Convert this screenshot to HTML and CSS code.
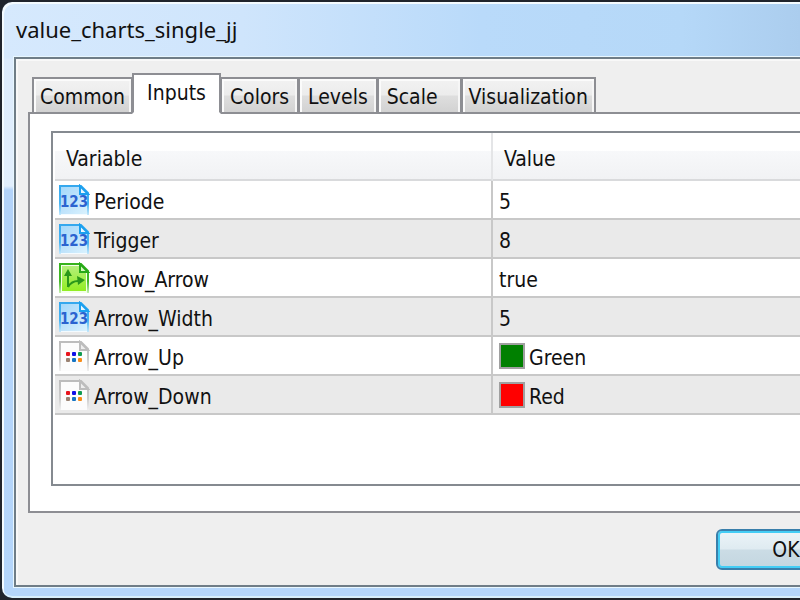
FILE: index.html
```html
<!DOCTYPE html>
<html lang="en">
<head>
<meta charset="utf-8">
<title>value_charts_single_jj</title>
<link rel="stylesheet" href="styles.css">
</head>
<body>
<svg width="0" height="0" class="defs" aria-hidden="true">
  <defs>
    <linearGradient id="blue" x1="0" y1="0" x2="1" y2="1"><stop offset="0" stop-color="#a5d9fb"/><stop offset=".5" stop-color="#bfe3fb"/><stop offset="1" stop-color="#d9f2fe"/></linearGradient>
    <linearGradient id="blueEdge" x1="0" y1="0" x2="0" y2="1"><stop offset="0" stop-color="#35a8ee"/><stop offset=".6" stop-color="#48b4f2"/><stop offset="1" stop-color="#c4e8fc"/></linearGradient>
    <linearGradient id="green" x1="0" y1="0" x2="0" y2="1"><stop offset="0" stop-color="#b5ef7c"/><stop offset="1" stop-color="#92ee22"/></linearGradient>
    <linearGradient id="greenEdge" x1="0" y1="0" x2="0" y2="1"><stop offset="0" stop-color="#37b31d"/><stop offset=".6" stop-color="#45b92a"/><stop offset="1" stop-color="#c4efb0"/></linearGradient>
    <linearGradient id="greyEdge" x1="0" y1="0" x2="0" y2="1"><stop offset="0" stop-color="#bcbcbc"/><stop offset=".6" stop-color="#cccccc"/><stop offset="1" stop-color="#f0f0f0"/></linearGradient>
    <symbol id="number" viewBox="0 0 32 32">
      <path d="M1 1H23L31 9V31H1Z" fill="#f4fbff"/>
      <path d="M3 3H22V10H29V30H3Z" fill="url(#blue)"/>
      <path d="M2 31V2H23L30 9V31" fill="none" stroke="url(#blueEdge)" stroke-width="2"/>
      <path d="M22 2V10H30Z" fill="#e9f8ff" stroke="#1ba0ef" stroke-width="2"/>
      <text x="16" y="23" text-anchor="middle" class="digits">123</text>
    </symbol>
    <symbol id="bool" viewBox="0 0 32 32">
      <path d="M1 1H23L31 9V31H1Z" fill="#f2ffe8"/>
      <path d="M4 4H22V10H28V29H4Z" fill="url(#green)"/>
      <path d="M2 31V2H23L30 9V31" fill="none" stroke="url(#greenEdge)" stroke-width="2"/>
      <path d="M22 2V10H30Z" fill="#d6f8bd" stroke="#26a818" stroke-width="2"/>
      <path d="M10 25V12M10 25C13 20 16 19 20 19" fill="none" stroke="#2a981a" stroke-width="2"/>
      <path d="M6 14L10 7L14 14ZM19 14L27 18L20 23Z" fill="#2a981a"/>
    </symbol>
    <symbol id="color" viewBox="0 0 32 32">
      <path d="M2 2H23L30 9V31H2Z" fill="#fcfcfc"/>
      <path d="M2 31V2H23L30 9V31" fill="none" stroke="url(#greyEdge)" stroke-width="2"/>
      <path d="M22 2V10H30Z" fill="#eeeeee" stroke="#bdbdbd" stroke-width="2"/>
      <rect x="8" y="12" width="4" height="4" rx="1" fill="#e8141c"/>
      <rect x="14" y="12" width="4" height="4" rx="1" fill="#1010e8"/>
      <rect x="20" y="12" width="4" height="4" rx="1" fill="#109a50"/>
      <rect x="8" y="18" width="4" height="4" rx="1" fill="#9a8272"/>
      <rect x="14" y="18" width="4" height="4" rx="1" fill="#1474c4"/>
      <rect x="20" y="18" width="4" height="4" rx="1" fill="#f88c18"/>
    </symbol>
  </defs>
</svg>
<div class="window">
  <h1 class="title">value_charts_single_jj</h1>
  <main class="client">
    <div class="tabs" role="tablist">
      <button class="tab long" role="tab">Common</button>
      <button class="tab active" role="tab" aria-selected="true">Inputs</button>
      <button class="tab" role="tab">Colors</button>
      <button class="tab" role="tab">Levels</button>
      <button class="tab scale" role="tab">Scale</button>
      <button class="tab long" role="tab">Visualization</button>
    </div>
    <section class="pane">
      <div class="list">
        <table>
          <colgroup><col class="name-col"><col></colgroup>
          <thead><tr><th>Variable</th><th>Value</th></tr></thead>
          <tbody>
            <tr><td><div class="cell"><svg class="icon"><use href="#number"/></svg>Periode</div></td><td>5</td></tr>
            <tr><td><div class="cell"><svg class="icon"><use href="#number"/></svg>Trigger</div></td><td>8</td></tr>
            <tr><td><div class="cell"><svg class="icon"><use href="#bool"/></svg>Show_Arrow</div></td><td>true</td></tr>
            <tr><td><div class="cell"><svg class="icon"><use href="#number"/></svg>Arrow_Width</div></td><td>5</td></tr>
            <tr><td><div class="cell"><svg class="icon"><use href="#color"/></svg>Arrow_Up</div></td><td><div class="cell"><span class="swatch green"></span>Green</div></td></tr>
            <tr><td><div class="cell"><svg class="icon"><use href="#color"/></svg>Arrow_Down</div></td><td><div class="cell"><span class="swatch red"></span>Red</div></td></tr>
          </tbody>
        </table>
      </div>
    </section>
    <footer class="actions"><button class="ok">OK</button></footer>
  </main>
</div>
</body>
</html>
```
FILE: styles.css
```css
* { box-sizing: border-box; }

body {
  margin: 0;
  background: #20242c;
  color: #111;
  font: 21px/26px "DejaVu Sans Condensed", "DejaVu Sans", sans-serif;
  overflow: hidden;
}

.defs { position: absolute; }

.window {
  display: flex;
  flex-direction: column;
  min-height: 100vh;
  padding: 0 0 11px 12px;
  border: solid #20242c;
  border-width: 2px 0 2px 2px;
  border-radius: 12px 0 0 12px;
  box-shadow: inset 2px 2px 0 #f4fbff, inset 0 -2px 0 #d8effc;
  background:
    linear-gradient(#d9eafc00 56px, #dcebfc 57px, #e2effd 184px, #b3d3f9 188px, #b5d6fb) 0 0 / 14px 100% no-repeat,
    linear-gradient(#b5d6fb, #b5d6fb) 0 100% / 100% 14px no-repeat,
    linear-gradient(90deg, #d6e9fd, #cfe5fc 240px, #b9dafa 480px, #b5d8f8 680px, #abcdee);
}

.title {
  margin: 0;
  padding: 11px 0 0 2px;
  height: 55px;
  font: 22px/32px "Noto Sans", "Open Sans", sans-serif;
}

.client {
  flex: 1;
  display: flex;
  flex-direction: column;
  padding: 14px 0 15px 12px;
  background: #efefef;
  border: 2px solid #6f7d87;
  border-right: 0;
  outline: 1px solid #e8f7ff;
  box-shadow: inset 2px 2px 0 #f8f8f8;
}

.tabs {
  display: flex;
  align-items: flex-end;
  padding-left: 5px;
  margin-bottom: -2px;
}

.tab {
  height: 37px;
  margin: 0 0 0 -1px;
  padding: 2px 8px 0;
  border: 2px solid #8d8e93;
  box-shadow: inset 2px 2px 0 #fbfbfb, inset -2px 0 0 #f6f6f6;
  background: linear-gradient(#f2f2f2, #ececec 48%, #dedede 52%, #d2d2d2);
  color: #111;
  font: inherit;
}

.tab.active {
  position: relative;
  height: 41px;
  padding: 0 13px 2px;
  border-bottom-color: #fff;
  background: #fff;
  box-shadow: none;
}

.tab.long { padding: 2px 6px 0; }

.tab.scale { padding-right: 22px; }

.pane {
  flex: 1;
  display: flex;
  padding: 17px 0 25px 21px;
  background: #fff;
  border: 2px solid #8d8e93;
  border-right: 0;
}

.list {
  flex: 1;
  padding-left: 2px;
  border: 2px solid #858a90;
  border-right: 0;
}

table {
  width: 100%;
  border-collapse: separate;
  border-spacing: 0;
  table-layout: fixed;
}

.name-col { width: 438px; }

th {
  height: 48px;
  padding: 6px 11px 0;
  text-align: left;
  font-weight: normal;
  background: linear-gradient(#fff 38%, #f7f8fa 40%, #f1f2f4);
  border-bottom: 2px solid #d9dadc;
}

th:first-child { border-right: 2px solid #e4e5e7; }

td {
  height: 39px;
  padding: 4px 6px 0;
  border-bottom: 2px solid #c8c8c8;
}

td:first-child {
  padding-left: 3px;
  border-right: 2px solid #c8c8c8;
}

tbody tr:nth-child(even) { background: #eaeaea; }

.cell {
  display: flex;
  align-items: center;
  gap: 4px;
}

.icon {
  flex: none;
  width: 32px;
  height: 32px;
  margin: -4px 0 0;
}

.digits {
  font: bold 15px "DejaVu Sans Condensed", sans-serif;
  fill: #2b63d0;
}

.swatch {
  width: 26px;
  height: 26px;
  margin-top: -4px;
  border: 2px solid #a0a0a0;
}

.green { background: #008000; }
.red { background: #ff0000; }

.actions {
  display: flex;
  justify-content: flex-end;
  padding-top: 16px;
  overflow: hidden;
}

.ok {
  width: 140px;
  height: 41px;
  margin-right: -56px;
  border: 2px solid #3a7fab;
  border-radius: 6px;
  box-shadow: inset 0 0 0 2px #43cdf5;
  background: linear-gradient(#ecf4f8, #dfebf1 48%, #cbdce5 52%, #c3d6e0);
  color: #111;
  font: inherit;
}
```
